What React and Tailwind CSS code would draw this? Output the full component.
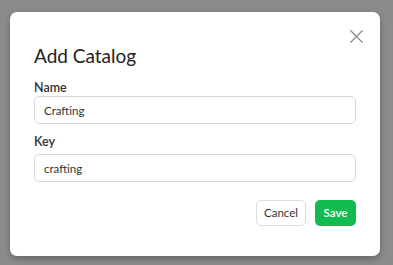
import { X } from 'lucide-react';

export default function App() {
  return (
    <div className="w-[393px] h-[265px] bg-[#8b8b8b] pt-[12px] pl-[10px] overflow-hidden" style={{ fontFamily: 'Lato, "Open Sans", sans-serif' }}>
      <div className="relative w-[370px] h-[244px] bg-white rounded-[7px] shadow-[0_3px_6px_rgba(0,0,0,0.25)] px-[24px] pt-[30px]">
        {/* Close button */}
        <button className="absolute top-[13px] right-[12px] w-[23px] h-[23px] flex items-center justify-center text-[#8a8a8a]">
          <X size={23} strokeWidth={1.3} />
        </button>

        <h2 className="text-[19px] leading-[28px] text-[#222] font-normal">Add Catalog</h2>

        <div className="mt-[10px]">
          <label className="block text-[12.5px] leading-[15px] font-semibold text-[#333]">Name</label>
          <input
            readOnly
            value="Crafting"
            className="mt-[1px] w-full h-[28px] border border-[#dadada] rounded-[5px] px-[9px] text-[11.5px] text-[#333] outline-none"
          />
        </div>

        <div className="mt-[10px]">
          <label className="block text-[12.5px] leading-[15px] font-semibold text-[#333]">Key</label>
          <input
            readOnly
            value="crafting"
            className="mt-[5px] w-full h-[28px] border border-[#dadada] rounded-[5px] px-[9px] text-[11.5px] text-[#333] outline-none"
          />
        </div>

        <div className="mt-[18px] flex justify-end gap-[9px]">
          <button className="w-[50px] h-[26px] border border-[#dcdcdc] rounded-[5px] bg-white text-[11.5px] text-[#333]">Cancel</button>
          <button className="w-[41px] h-[26px] rounded-[5px] bg-[#10bb4f] text-[11.5px] font-semibold text-white">Save</button>
        </div>
      </div>
    </div>
  );
}
